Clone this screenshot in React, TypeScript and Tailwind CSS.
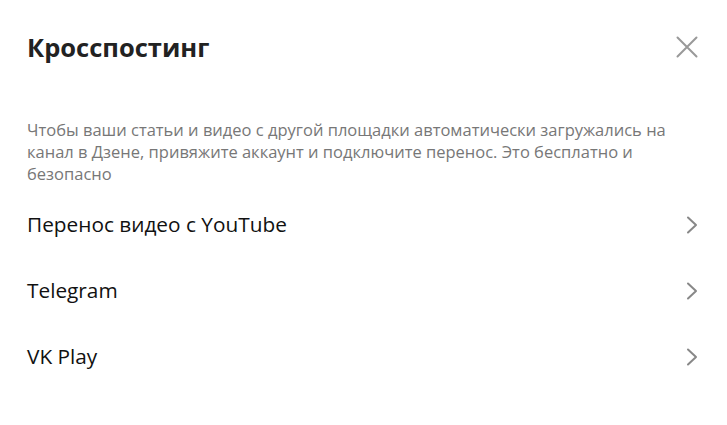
import React from "react";

const items = ["Перенос видео с YouTube", "Telegram", "VK Play"];

function Chevron() {
  return (
    <svg width="12" height="18" viewBox="0 0 12 18" fill="none">
      <path d="M2 1.5 L10 9 L2 16.5" stroke="#888888" strokeWidth="2" strokeLinecap="round" strokeLinejoin="round" />
    </svg>
  );
}

export default function App() {
  return (
    <div className="w-[727px] h-[425px] bg-white font-['Open_Sans','Noto_Sans',sans-serif]">
      <div className="flex items-start justify-between pl-[27px] pr-[29px] pt-[29px]">
        <h1 className="text-[25.5px] font-bold leading-[36px] text-[#222222]">Кросспостинг</h1>
        <button className="mt-[7px] w-[22px] h-[22px] flex items-center justify-center">
          <svg width="22" height="22" viewBox="0 0 22 22" fill="none">
            <path d="M1.5 1.5 L20.5 20.5 M20.5 1.5 L1.5 20.5" stroke="#999999" strokeWidth="2" strokeLinecap="round" />
          </svg>
        </button>
      </div>
      <p className="mt-[54px] pl-[27px] pr-[40px] text-[16.5px] leading-[22px] text-[#777777]">
        Чтобы ваши статьи и видео с другой площадки автоматически загружались на канал в Дзене, привяжите аккаунт и подключите перенос. Это бесплатно и безопасно
      </p>
      <div className="mt-[7px] flex flex-col">
        {items.map((t) => (
          <div key={t} className="flex items-center justify-between h-[66px] pl-[27px] pr-[29px]">
            <span className="text-[20.8px] text-[#111111]">{t}</span>
            <Chevron />
          </div>
        ))}
      </div>
    </div>
  );
}
